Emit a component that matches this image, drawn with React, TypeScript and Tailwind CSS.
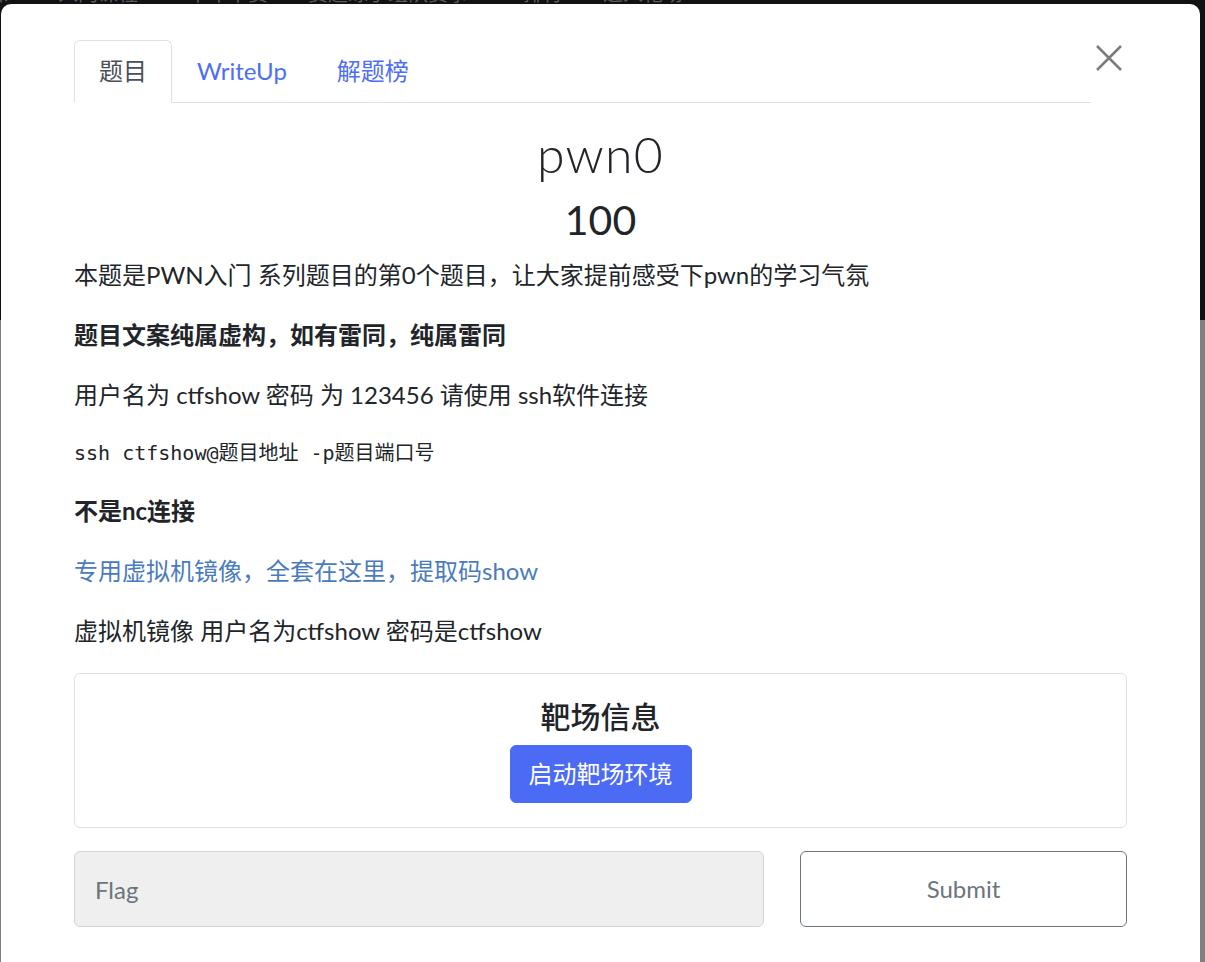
import React from "react";

const navItems = [
  { label: "课", cls: "-ml-[12px]" },
  { label: "入门课程", cls: "ml-[50px]" },
  { label: "单车单赛", cls: "ml-[50px]" },
  { label: "赛题练手组队赛事", cls: "ml-[40px]" },
  { label: "排行", cls: "ml-[55px]" },
  { label: "进入靶场", cls: "ml-[40px]" },
];

const tabs = [
  { id: "desc", label: "题目", active: true },
  { id: "wp", label: "WriteUp" },
  { id: "rank", label: "解题榜" },
];

const App: React.FC = () => {
  return (
    <div
      className="relative h-[962px] w-full overflow-hidden bg-[#808080]"
      style={{ fontFamily: "Lato, 'Noto Sans CJK SC', sans-serif" }}
    >
      {/* 뒤쪽 페이지 헤더 (백드롭 아래) */}
      <div className="h-[320px] bg-[#111214] flex flex-col">
        <div className="flex -mt-[22px] text-[20px] leading-[30px] text-[#5a5c60] whitespace-nowrap">
          {navItems.map((item) => (
            <span key={item.label} className={item.cls}>
              {item.label}
            </span>
          ))}
        </div>
      </div>

      {/* 모달 */}
      <div className="absolute left-[1px] top-[4px] w-[1199px] h-[980px] bg-white rounded-[10px] pt-[36px] px-[73px] text-[#212529]">
        <div className="flex items-start">
          <div className="flex flex-1 border-b border-[#dee2e6]">
            {tabs.map((tab) =>
              tab.active ? (
                <div
                  key={tab.id}
                  className="-mb-px px-[24px] py-[12px] text-[24px] leading-[36px] text-[#495057] bg-white border border-[#dee2e6] border-b-white rounded-t-[6px]"
                >
                  {tab.label}
                </div>
              ) : (
                <div
                  key={tab.id}
                  className="px-[24px] py-[12px] border border-transparent text-[24px] leading-[36px] text-[#4d6ef5]"
                >
                  {tab.label}
                </div>
              )
            )}
          </div>
          <button className="w-[36px] h-[36px] flex items-center justify-center">
            <svg width="26" height="26" viewBox="0 0 26 26" fill="none">
              <path
                d="M1 1L25 25M25 1L1 25"
                stroke="#7b7b7b"
                strokeWidth="2.5"
              />
            </svg>
          </button>
        </div>

        <div className="text-center mt-[21px]">
          <h1 className="text-[50px] leading-[60px] font-light tracking-wide">pwn0</h1>
          <h2 className="text-[41px] leading-[50px] mt-[11px] font-normal">100</h2>
        </div>

        <div className="text-[24px] leading-[36px] mt-[12px]">
          <p className="mb-[24px]">
            本题是PWN入门 系列题目的第0个题目，让大家提前感受下pwn的学习气氛
          </p>
          <p className="mb-[24px] font-bold">题目文案纯属虚构，如有雷同，纯属雷同</p>
          <p className="mb-[24px]">
            用户名为 ctfshow 密码 为 123456 请使用 ssh软件连接
          </p>
          <p
            className="mb-[24px] text-[20px] leading-[32px] text-[#212529]"
            style={{ fontFamily: "'DejaVu Sans Mono', 'Noto Sans CJK SC', monospace" }}
          >
            ssh ctfshow@题目地址 -p题目端口号
          </p>
          <p className="mb-[24px] font-bold">不是nc连接</p>
          <p className="mb-[24px]">
            <a className="text-[#4a7bbd]">专用虚拟机镜像，全套在这里，提取码show</a>
          </p>
          <p className="mb-[24px]">虚拟机镜像 用户名为ctfshow 密码是ctfshow</p>
        </div>

        <div className="border border-[#dee2e6] rounded-[6px] py-[24px] flex flex-col items-center">
          <h5 className="text-[30px] leading-[36px] font-medium mb-[11px]">靶场信息</h5>
          <button className="bg-[#4b6bf5] text-white text-[24px] leading-[36px] px-[18px] py-[10px] rounded-[6px] border border-[#4b6bf5]">
            启动靶场环境
          </button>
        </div>

        <div className="flex gap-[36px] mt-[23px]">
          <input
            placeholder="Flag"
            className="w-[690px] h-[76px] bg-[#efefef] border border-[#d4d4d4] rounded-[6px] px-[20px] text-[24px] placeholder:text-[#6c757d] outline-none"
          />
          <button className="flex-1 h-[76px] border border-[#6c757d] rounded-[6px] text-[24px] text-[#6c757d] bg-white">
            Submit
          </button>
        </div>
      </div>
    </div>
  );
};

export default App;
